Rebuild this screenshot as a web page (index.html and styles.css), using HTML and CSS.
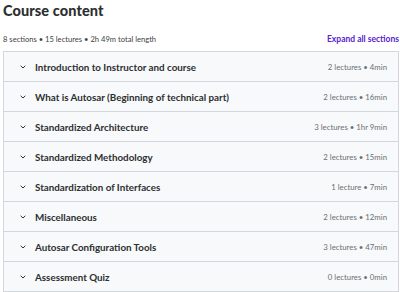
FILE: index.html
```html
<!DOCTYPE html>
<html lang="en">
<head>
  <meta charset="UTF-8">
  <meta name="viewport" content="width=device-width, initial-scale=1.0">
  <title>Course content</title>
  <link rel="stylesheet" href="styles.css">
</head>
<body>
  <h2 class="title">Course content</h2>
  <div class="summary">
    <span>8 sections • 15 lectures • 2h 49m total length</span>
    <button class="expand">Expand all sections</button>
  </div>

  <div class="sections">
    <div class="section">
      <span class="chev"><svg width="6" height="4" viewBox="0 0 6 4"><path d="M.7 .8L3 3 5.3 .8" fill="none" stroke="#2d2f31" stroke-width="1"/></svg></span>
      <span class="name">Introduction to Instructor and course</span>
      <span class="meta">2 lectures • 4min</span>
    </div>
    <div class="section">
      <span class="chev"><svg width="6" height="4" viewBox="0 0 6 4"><path d="M.7 .8L3 3 5.3 .8" fill="none" stroke="#2d2f31" stroke-width="1"/></svg></span>
      <span class="name">What is Autosar (Beginning of technical part)</span>
      <span class="meta">2 lectures • 16min</span>
    </div>
    <div class="section">
      <span class="chev"><svg width="6" height="4" viewBox="0 0 6 4"><path d="M.7 .8L3 3 5.3 .8" fill="none" stroke="#2d2f31" stroke-width="1"/></svg></span>
      <span class="name">Standardized Architecture</span>
      <span class="meta">3 lectures • 1hr 9min</span>
    </div>
    <div class="section">
      <span class="chev"><svg width="6" height="4" viewBox="0 0 6 4"><path d="M.7 .8L3 3 5.3 .8" fill="none" stroke="#2d2f31" stroke-width="1"/></svg></span>
      <span class="name">Standardized Methodology</span>
      <span class="meta">2 lectures • 15min</span>
    </div>
    <div class="section">
      <span class="chev"><svg width="6" height="4" viewBox="0 0 6 4"><path d="M.7 .8L3 3 5.3 .8" fill="none" stroke="#2d2f31" stroke-width="1"/></svg></span>
      <span class="name">Standardization of Interfaces</span>
      <span class="meta">1 lecture • 7min</span>
    </div>
    <div class="section">
      <span class="chev"><svg width="6" height="4" viewBox="0 0 6 4"><path d="M.7 .8L3 3 5.3 .8" fill="none" stroke="#2d2f31" stroke-width="1"/></svg></span>
      <span class="name">Miscellaneous</span>
      <span class="meta">2 lectures • 12min</span>
    </div>
    <div class="section">
      <span class="chev"><svg width="6" height="4" viewBox="0 0 6 4"><path d="M.7 .8L3 3 5.3 .8" fill="none" stroke="#2d2f31" stroke-width="1"/></svg></span>
      <span class="name">Autosar Configuration Tools</span>
      <span class="meta">3 lectures • 47min</span>
    </div>
    <div class="section">
      <span class="chev"><svg width="6" height="4" viewBox="0 0 6 4"><path d="M.7 .8L3 3 5.3 .8" fill="none" stroke="#2d2f31" stroke-width="1"/></svg></span>
      <span class="name">Assessment Quiz</span>
      <span class="meta">0 lectures • 0min</span>
    </div>
  </div>
</body>
</html>
```

FILE: styles.css
```css
* {
  margin: 0;
  padding: 0;
  box-sizing: border-box;
}
body {
  font-family: 'Lato', 'Liberation Sans', sans-serif;
  color: #2d2f31;
  background: #fff;
  padding: 0 1px 0 3px;
  overflow: hidden;
}
.title {
  font-size: 14.5px;
  font-weight: 900;
  line-height: 20px;
  padding-top: 1px;
  letter-spacing: 0.1px;
}
.summary {
  display: flex;
  justify-content: space-between;
  align-items: center;
  margin-top: 12px;
  font-size: 7.6px;
  color: #3e4143;
  height: 12px;
  white-space: nowrap;
}
.expand {
  background: none;
  border: none;
  color: #5624d0;
  font-family: inherit;
  font-weight: 700;
  font-size: 8.5px;
  margin-right: 0;
}
.sections {
  margin-top: 6px;
  border: 1px solid #d1d7dc;
}
.section {
  display: flex;
  align-items: center;
  height: 30px;
  background: #f7f9fa;
  border-bottom: 1px solid #d1d7dc;
  padding: 0 11px 0 16px;
}
.section:last-child {
  border-bottom: none;
  height: 29px;
}
.chev {
  display: flex;
  width: 15px;
}
.name {
  flex: 1;
  font-size: 9.8px;
  font-weight: 700;
}
.meta {
  font-size: 7.8px;
  color: #6a6f73;
}
```
